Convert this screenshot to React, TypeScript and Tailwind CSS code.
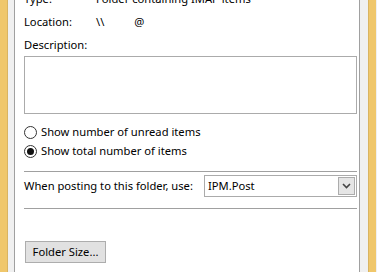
import React from "react";

export default function App() {
  return (
    <div
      className="flex h-[272px] w-[377px] overflow-hidden bg-[#f0f0f0] text-[11.2px] leading-[16px] text-black"
      style={{ fontFamily: '"Noto Sans", "Open Sans", sans-serif' }}
    >
      <div className="w-[7px] shrink-0 bg-[#f0c76b]" />
      <div className="w-[1px] shrink-0 bg-[#d9b462]" />
      <div className="w-[6px] shrink-0 bg-[#f0f0f0]" />
      <div className="flex w-[346px] shrink-0 flex-col border-x border-[#a0a0a0] bg-white pl-[9px] pr-[2px]">
        <div className="mt-[-9px] flex h-[23px] shrink-0 whitespace-nowrap">
          <span className="w-[72px]">Type:</span>
          <span>Folder containing IMAP items</span>
        </div>
        <div className="flex h-[23px] shrink-0">
          <span className="w-[72px]">Location:</span>
          <span>\\</span>
          <span className="ml-[30px]">@</span>
        </div>
        <div className="h-[19px] shrink-0">Description:</div>
        <div className="h-[58px] shrink-0 border border-[#ababab] bg-white" />
        <div className="mt-[10px] flex h-[19px] shrink-0 items-start">
          <span className="mt-[2px] mr-[4px] h-[13px] w-[13px] rounded-full border border-[#333] bg-white" />
          <span>Show number of unread items</span>
        </div>
        <div className="flex h-[16px] shrink-0 items-start">
          <span className="mt-[2px] mr-[4px] flex h-[13px] w-[13px] items-center justify-center rounded-full border border-[#333] bg-white">
            <span className="h-[7px] w-[7px] rounded-full bg-[#111]" />
          </span>
          <span>Show total number of items</span>
        </div>
        <div className="mt-[12px] h-[1px] shrink-0 bg-[#a0a0a0]" />
        <div className="mt-[3px] flex h-[22px] shrink-0 items-center">
          <span className="flex-1 whitespace-nowrap">When posting to this folder, use:</span>
          <div className="flex h-[22px] w-[153px] items-center border border-[#ababab] bg-white">
            <span className="flex-1 pl-[3px]">IPM.Post</span>
            <div className="mr-[1px] flex h-[18px] w-[17px] items-center justify-center border border-[#acacac] bg-[#e5e5e5]">
              <svg width="9" height="6" viewBox="0 0 9 6">
                <path d="M1 1 L4.5 4.5 L8 1" stroke="#444" strokeWidth="1.6" fill="none" />
              </svg>
            </div>
          </div>
        </div>
        <div className="mt-[11px] h-[1px] shrink-0 bg-[#a0a0a0]" />
        <div className="mt-[32px] flex shrink-0">
          <button className="ml-[1px] h-[22px] w-[81px] border border-[#adadad] bg-[#e1e1e1] text-[11.2px] leading-[16px]">
            Folder Size...
          </button>
        </div>
      </div>
      <div className="w-[8px] shrink-0 bg-[#f0f0f0]" />
      <div className="w-[1px] shrink-0 bg-[#d9b462]" />
      <div className="w-[7px] shrink-0 bg-[#f0c76b]" />
    </div>
  );
}
